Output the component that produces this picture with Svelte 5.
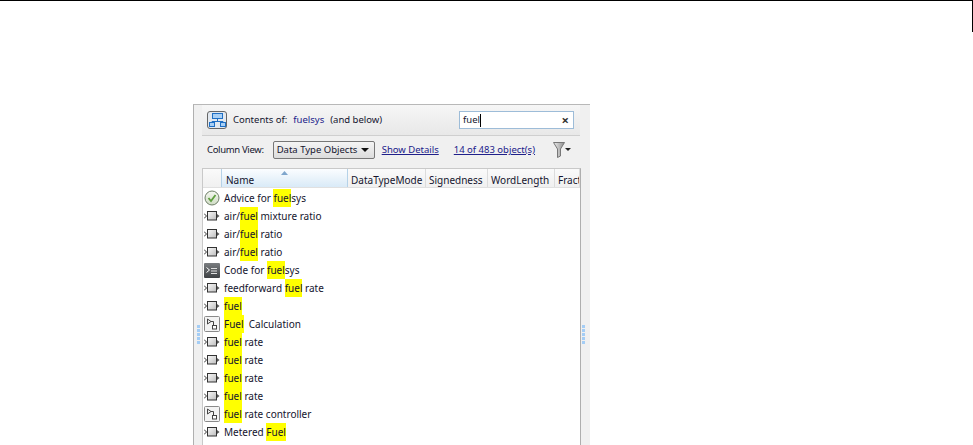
<script>
  const rows = [
    { icon: 'ok', parts: ['Advice for ', '*fuel', 'sys'] },
    { icon: 'sig', parts: ['air/', '*fuel', ' mixture ratio'] },
    { icon: 'sig', parts: ['air/', '*fuel', ' ratio'] },
    { icon: 'sig', parts: ['air/', '*fuel', ' ratio'] },
    { icon: 'code', parts: ['Code for ', '*fuel', 'sys'] },
    { icon: 'sig', parts: ['feedforward ', '*fuel', ' rate'] },
    { icon: 'sig', parts: ['*fuel'] },
    { icon: 'sub', parts: ['*Fuel', '  Calculation'] },
    { icon: 'sig', parts: ['*fuel', ' rate'] },
    { icon: 'sig', parts: ['*fuel', ' rate'] },
    { icon: 'sig', parts: ['*fuel', ' rate'] },
    { icon: 'sig', parts: ['*fuel', ' rate'] },
    { icon: 'sub', parts: ['*fuel', ' rate controller'] },
    { icon: 'sig', parts: ['Metered ', '*Fuel'] }
  ];
  const cols = [
    { label: 'DataTypeMode', w: 78 },
    { label: 'Signedness', w: 62 },
    { label: 'WordLength', w: 67 },
    { label: 'Fract', w: 25 }
  ];
</script>

<div class="page">
  <div class="rule"></div>
  <section class="panel">
    <div class="toolbar">
      <button class="hier" aria-label="hierarchy">
        <svg width="17" height="14" viewBox="0 0 17 14" fill="none" stroke="#1f6fc4">
          <rect x="3.500" y=".5" width="10" height="5" fill="#a9d0f5"/>
          <path d="M8.500 5.500v3M3 8.500h11M3 8.500v1M14 8.500v1"/>
          <rect x=".5" y="9.500" width="5" height="4" fill="#a9d0f5"/>
          <rect x="11.500" y="9.500" width="5" height="4" fill="#a9d0f5"/>
        </svg>
      </button>
      <span class="contents">Contents of:</span>
      <span class="link-plain">fuelsys</span>
      <span class="below">(and below)</span>
      <div class="search"><span class="query">fuel</span><span class="caret"></span><span class="clear">×</span></div>
    </div>
    <div class="filters">
      <span class="cv">Column View:</span>
      <div class="select"><span>Data Type Objects</span><i></i></div>
      <a href="#a" class="details">Show Details</a>
      <a href="#b" class="count">14 of 483 object(s)</a>
      <svg class="funnel" width="18" height="16" viewBox="0 0 18 16">
        <defs><linearGradient id="fg" x1="0" x2="1" y1="0" y2="0"><stop offset="0" stop-color="#f0f0f0"/><stop offset="1" stop-color="#8a8a8a"/></linearGradient></defs>
        <path d="M.5 .5h11L7.500 7v7l-3 1.500V7z" fill="url(#fg)" stroke="#777"/>
        <path d="M12 6h6l-3 3z" fill="#222"/>
      </svg>
    </div>
    <div class="table">
      <div class="thead">
        <div class="corner"></div>
        <div class="name">Name<svg class="sort" width="7" height="4" viewBox="0 0 7 4"><path d="M3.500 0L7 4H0z" fill="#7fa6cc"/></svg></div>
        {#each cols as c}
          <div class="th" style="width:{c.w}px">{c.label}</div>
        {/each}
      </div>
      <div class="tbody">
        {#each rows as r}
          <div class="row">
            <span class="icon">
              {#if r.icon === 'ok'}
                <svg width="16" height="16" viewBox="0 0 16 16"><defs><linearGradient id="og" x1="0" x2="0" y1="0" y2="1"><stop offset="0" stop-color="#f6f8f2"/><stop offset="1" stop-color="#cfdcc4"/></linearGradient></defs><circle cx="8" cy="8" r="7" fill="url(#og)" stroke="#6f7f68"/><path d="M4.500 8l2.500 3 4.500-6" fill="none" stroke="#5f9f3f" stroke-width="1.800"/></svg>
              {:else if r.icon === 'code'}
                <svg width="16" height="15" viewBox="0 0 16 15"><defs><linearGradient id="cg" x1="0" x2="0" y1="0" y2="1"><stop offset="0" stop-color="#7a7d80"/><stop offset="1" stop-color="#3e4144"/></linearGradient></defs><rect width="16" height="15" rx="1" fill="url(#cg)"/><path d="M2.500 4.500l3 2.500-3 2.500" fill="none" stroke="#fff"/><path d="M7 5.500h6M7 8h6M7 10.500h6" stroke="#dfdfdf"/></svg>
              {:else if r.icon === 'sub'}
                <svg width="16" height="16" viewBox="0 0 16 16" fill="none" stroke="#444"><rect x=".5" y=".5" width="15" height="15" rx="1" fill="#f4f4f4" stroke="#8a8a8a"/><path d="M3.500 3v5l3.500-2.500zM7 5.500h2.500v4"/><rect x="8.500" y="9.500" width="4" height="3.500" fill="#fff"/></svg>
              {:else}
                <svg width="16" height="12" viewBox="0 0 16 12"><defs><linearGradient id="sg" x1="0" x2="1" y1="0" y2="1"><stop offset="0" stop-color="#fafafa"/><stop offset="1" stop-color="#bdbdbd"/></linearGradient></defs><path d="M0 3.500l2.500 2.500-2.500 2.500" fill="none" stroke="#333"/><rect x="3.500" y="1.500" width="9" height="8.500" fill="url(#sg)" stroke="#333"/><path d="M13 4l2.500 2-2.500 2z" fill="#555"/></svg>
              {/if}
            </span>
            <span class="label">{#each r.parts as p}{#if p[0] === '*'}<mark>{p.slice(1)}</mark>{:else}{p}{/if}{/each}</span>
          </div>
        {/each}
      </div>
    </div>
    <div class="grip left"><b></b><b></b><b></b><b></b><b></b></div>
    <div class="grip right"><b></b><b></b><b></b><b></b><b></b></div>
  </section>
</div>

<style>
  :global(body) { margin: 0; background: #fff; }
  .page { width: 973px; height: 445px; overflow: hidden; font: 10px/12px "Noto Sans", sans-serif; color: #14142e; }
  .rule { height: 32px; border-top: 1px solid #000; border-right: 1px solid #000; box-sizing: border-box; margin-bottom: 72px; }
  .panel { position: relative; box-sizing: border-box; width: 397px; height: 341px; margin-left: 193px; background: #f0f0f0; border-left: 1px solid #b0b0b0; border-top: 1px solid #b8b8b8; padding-left: 8px; }
  .toolbar { display: flex; align-items: center; height: 31px; margin-right: 10px; padding-left: 5px; font-size: 9.5px; background: linear-gradient(#f6f6f6, #e8e8e8); border-bottom: 1px solid #cfcfcf; box-sizing: border-box; }
  .hier { box-sizing: border-box; width: 20px; height: 18px; padding: 0; margin: 0 6px 0 0; display: flex; align-items: center; justify-content: center; background: #e2e8ef; border: 1px solid #666; border-radius: 3px; }
  .contents { margin-right: 6px; }
  .link-plain { color: #20208a; margin-right: 6px; }
  .search { position: relative; box-sizing: border-box; display: flex; align-items: center; width: 115px; height: 18px; margin-left: auto; margin-right: 6px; padding-left: 3px; background: #fff; border: 1px solid #9dbcd8; }
  .caret { width: 1px; height: 13px; background: #000; }
  .clear { position: absolute; right: 4px; top: 2px; font-size: 13px; font-weight: 700; color: #333; }
  .filters { display: flex; align-items: center; height: 32px; box-sizing: border-box; padding: 0 0 4px 5px; font-size: 9.5px; }
  .cv { margin-right: 9px; letter-spacing: -.33px; }
  .select { box-sizing: border-box; display: flex; align-items: center; justify-content: space-between; width: 102px; height: 18px; padding: 0 5px 0 3px; margin-right: 7px; background: linear-gradient(#f4f4f4, #dcdcdc); border: 1px solid #777; border-radius: 2px; }
  .select i { border: 4px solid transparent; border-top-color: #111; border-bottom: 0; }
  a { color: #20208a; }
  .details { margin-right: 15px; }
  .count { margin-right: 18px; }
  .table { box-sizing: border-box; width: 379px; background: #fff; border: 1px solid #c9c9c9; border-right: 1px solid #aeaeae; border-bottom: 0; height: 277px; overflow: hidden; }
  .thead { display: flex; height: 18px; background: linear-gradient(#fafafa, #f0f0f0); border-bottom: 1px solid #e0e0e0; }
  .corner { width: 18px; }
  .name { position: relative; box-sizing: border-box; width: 127px; padding: 5px 0 0 4px; background: linear-gradient(#fbfdff, #d9eaf7); border: solid #b5d2e8; border-width: 0 1px 0 1px; }
  .sort { position: absolute; left: 59px; top: 2px; }
  .th { box-sizing: border-box; padding: 5px 0 0 3px; border-right: 1px solid #dcdcdc; white-space: nowrap; overflow: hidden; }
  .row { display: flex; align-items: center; height: 18px; }
  .tbody { padding-top: 1px; }
  .icon { display: flex; align-items: center; justify-content: center; width: 16px; margin: 0 4px 0 1px; }
  .label { white-space: pre; line-height: 18px; }
  mark { background: #ff0; color: inherit; display: inline-block; height: 18px; }
  .grip { position: absolute; display: flex; flex-direction: column; gap: 1px; top: 220px; }
  .grip b { width: 3px; height: 3px; background: #a4cdf5; }
  .grip.left { left: 3px; }
  .grip.right { right: 5px; }
</style>
